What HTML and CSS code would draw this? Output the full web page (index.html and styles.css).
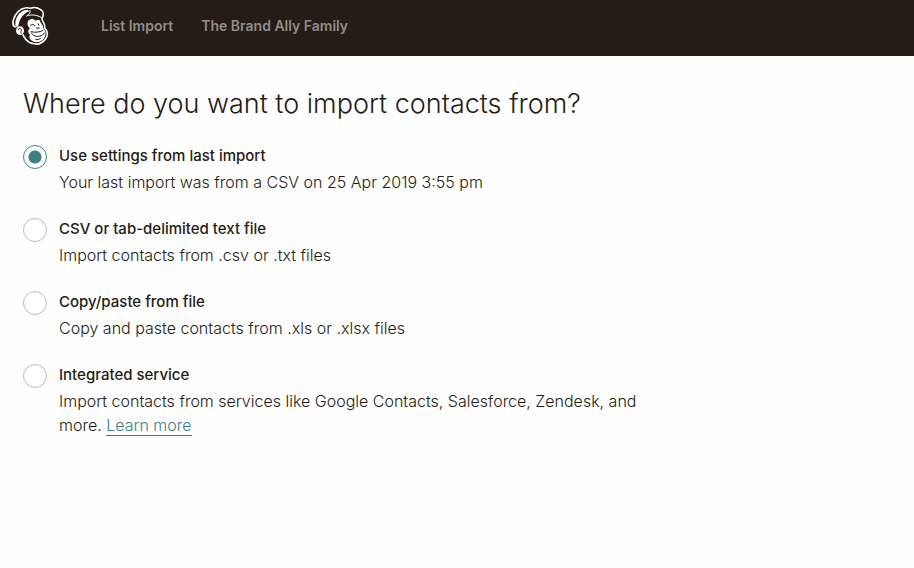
FILE: index.html
```html
<!DOCTYPE html>
<html lang="en">
    <head>
        <meta charset="UTF-8" />
        <meta name="viewport" content="width=device-width, initial-scale=1.0" />
        <title>List Import</title>
        <link rel="stylesheet" href="styles.css">
    </head>
    <body>
        <header class="top-bar">
            <a href="#" class="logo" aria-label="Home">
                <svg viewBox="33 18 114 120" width="38" height="40" aria-hidden="true">
                    <!-- Head and cap outline -->
                    <path class="fill-dark line" d="M47 82 C38 78 38 66 41 57 C46 40 61 25 76 24 C84 21 88 27 94 24 C105 20 116 25 122 29 C131 33 131 44 127 53 C125 57 127 62 130 67 C134 73 135 79 134 85 C144 92 144 106 137 116 C127 130 111 135 96 130 C82 126 74 116 68 103" />
                    <!-- Cap -->
                    <path class="fill-light" d="M47 80 C43 62 52 42 68 33 C76 28 84 29 89 34 C75 37 61 52 57 70 L54 80 Z" />
                    <path class="thin" d="M89 30 C93 36 88 43 80 48 C94 42 111 45 125 53" />
                    <!-- Face -->
                    <path class="fill-light" d="M86 61 C93 55 102 57 107 62 C116 56 121 61 122 68 C129 76 131 81 130 87 C140 93 138 108 131 116 C122 128 104 130 94 121 C86 116 88 108 90 103 C83 99 83 91 90 85 C82 80 80 68 86 61 Z" />
                    <path class="thin dark" d="M91 76 Q98 70 105 77 M114 70 L117 77 M108 84 L119 84" />
                    <path class="thin dark" d="M92 95 C104 98 119 97 130 91 M94 98 C97 106 104 109 113 109 C123 109 130 105 134 98 M106 119 Q115 120 122 115" />
                    <!-- Ear -->
                    <ellipse class="fill-light" cx="60" cy="92" rx="12" ry="13" />
                    <path class="thin dark" d="M54 91 C55 83 65 84 64 91 C63 96 61 94 64 101" />
                </svg>
            </a>
            <nav class="crumbs">
                <a href="#">List Import</a>
                <a href="#">The Brand Ally Family</a>
            </nav>
        </header>

        <main class="content">
            <h1>Where do you want to import contacts from?</h1>
            <form class="options">
                <div class="option">
                    <input type="radio" name="source" id="source-last" checked />
                    <div class="option-text">
                        <label for="source-last">Use settings from last import</label>
                        <p>Your last import was from a CSV on 25 Apr 2019 3:55 pm</p>
                    </div>
                </div>
                <div class="option">
                    <input type="radio" name="source" id="source-csv" />
                    <div class="option-text">
                        <label for="source-csv">CSV or tab-delimited text file</label>
                        <p>Import contacts from .csv or .txt files</p>
                    </div>
                </div>
                <div class="option">
                    <input type="radio" name="source" id="source-paste" />
                    <div class="option-text">
                        <label for="source-paste">Copy/paste from file</label>
                        <p>Copy and paste contacts from .xls or .xlsx files</p>
                    </div>
                </div>
                <div class="option">
                    <input type="radio" name="source" id="source-service" />
                    <div class="option-text">
                        <label for="source-service">Integrated service</label>
                        <p>
                            Import contacts from services like Google Contacts,
                            Salesforce, Zendesk, and more.
                            <a href="#">Learn more</a>
                        </p>
                    </div>
                </div>
            </form>
        </main>
    </body>
</html>
```

FILE: styles.css
```css
body {
    margin: 0;
    background-color: #fefefe;
    color: #241c15;
    font-family: Inter, "Liberation Sans", sans-serif;
    font-size: 15px;
    line-height: 24px;
}

.top-bar {
    display: flex;
    align-items: center;
    gap: 52px;
    height: 56px;
    padding: 0 11px;
    background-color: #241c15;
}

.logo {
    display: flex;
    margin-bottom: 4px;
}

.fill-light {
    fill: #fff;
}

.fill-dark {
    fill: #241c15;
}

.line {
    stroke: #fff;
    stroke-width: 5;
}

.thin {
    fill: none;
    stroke: #fff;
    stroke-width: 3;
}

.dark {
    stroke: #241c15;
}

.crumbs {
    display: flex;
    gap: 28px;
    padding-bottom: 4px;
}

.crumbs a {
    color: #918d89;
    font-size: 14px;
    font-weight: 600;
    text-decoration: none;
}

.content {
    max-width: 640px;
    padding: 28px 23px;
}

h1 {
    margin: 0 0 20px;
    font-size: 27px;
    font-weight: 300;
    line-height: 40px;
}

.options {
    display: flex;
    flex-direction: column;
    gap: 23px;
}

.option {
    display: flex;
    gap: 12px;
}

.option input {
    appearance: none;
    flex: none;
    width: 24px;
    height: 24px;
    margin: 1px 0 0;
    border: 1px solid #bdbbb9;
    border-radius: 50%;
    background-color: #fff;
}

.option input:checked {
    border-color: #3b7f87;
    background: radial-gradient(circle, #3b7f87 6px, #fff 7px);
}

.option label {
    display: block;
    font-weight: 500;
}

.option p {
    margin: 2px 0 0;
    font-size: 16px;
    font-weight: 300;
}

.option a {
    border-bottom: 1px solid #3b7f87;
    color: #3b7f87;
    text-decoration: none;
}
```
